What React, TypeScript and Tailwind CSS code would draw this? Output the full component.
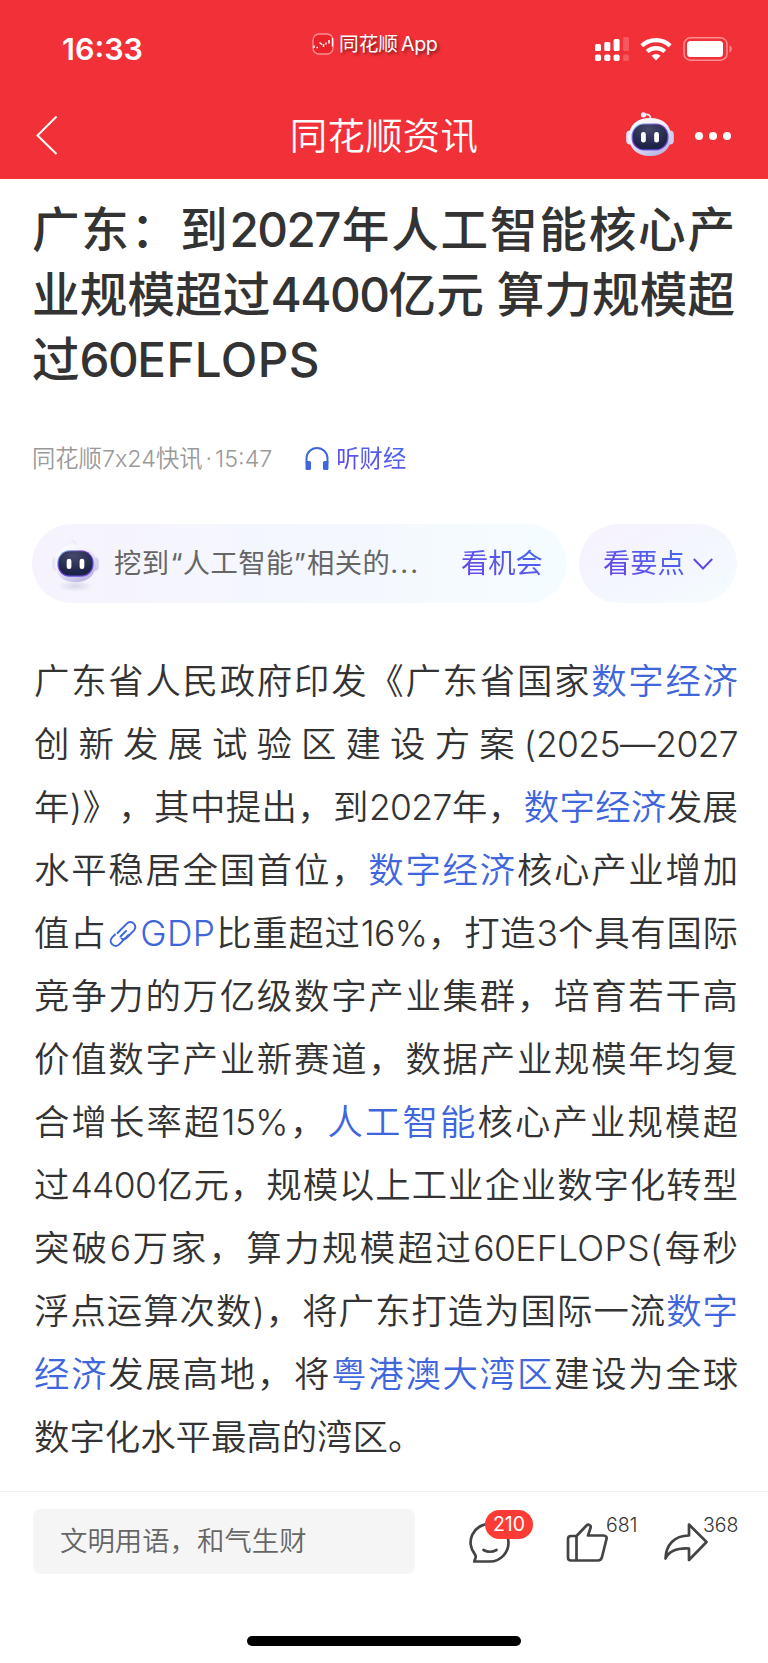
import React from 'react';
import { clsx } from 'clsx';

interface Segment {
  text: string;
  link?: boolean;
  icon?: boolean;
}

const CJK = 'font-[Inter,"Noto_Sans_CJK_SC",sans-serif]';

const titleLines = ['广东：到2027年人工智能核心产', '业规模超过4400亿元 算力规模超', '过60EFLOPS'];

const bodyLines: Segment[][] = [
  [{ text: '广东省人民政府印发《广东省国家' }, { text: '数字经济', link: true }],
  [{ text: '创新发展试验区建设方案(2025—2027' }],
  [{ text: '年)》，其中提出，到2027年，' }, { text: '数字经济', link: true }, { text: '发展' }],
  [{ text: '水平稳居全国首位，' }, { text: '数字经济', link: true }, { text: '核心产业增加' }],
  [{ text: '值占' }, { text: 'GDP', link: true, icon: true }, { text: '比重超过16%，打造3个具有国际' }],
  [{ text: '竞争力的万亿级数字产业集群，培育若干高' }],
  [{ text: '价值数字产业新赛道，数据产业规模年均复' }],
  [{ text: '合增长率超15%，' }, { text: '人工智能', link: true }, { text: '核心产业规模超' }],
  [{ text: '过4400亿元，规模以上工业企业数字化转型' }],
  [{ text: '突破6万家，算力规模超过60EFLOPS(每秒' }],
  [{ text: '浮点运算次数)，将广东打造为国际一流' }, { text: '数字', link: true }],
  [{ text: '经济', link: true }, { text: '发展高地，将' }, { text: '粤港澳大湾区', link: true }, { text: '建设为全球' }],
  [{ text: '数字化水平最高的湾区。' }],
];

// Digits are set a little tighter than the Chinese around them, capitals a little wider
const Mixed: React.FC<{ text: string; digits: string; letters: string }> = ({ text, digits, letters }) => (
  <>
    {text.split(/([0-9%]+|[A-Za-z]+)/).map((part, i) => {
      if (i % 2 === 0) return part;
      return <span key={i} className={/^[0-9]/.test(part) ? digits : letters}>{part}</span>;
    })}
  </>
);

const Robot: React.FC<{ id: string; className?: string; shadow?: boolean }> = ({ id, className, shadow }) => (
  <svg viewBox="0 0 48 56" className={className}>
    <defs>
      <linearGradient id={`${id}-shell`} x1="0" y1="0" x2="0.6" y2="1">
        <stop offset="0" stopColor="#ffffff" />
        <stop offset="0.5" stopColor="#f0effb" />
        <stop offset="1" stopColor="#bcb9e4" />
      </linearGradient>
      <linearGradient id={`${id}-rim`} x1="0" y1="0" x2="1" y2="1">
        <stop offset="0" stopColor="#6fd0f0" />
        <stop offset="0.4" stopColor="#8a45dd" />
        <stop offset="0.7" stopColor="#5a4fe0" />
        <stop offset="1" stopColor="#9a4be6" />
      </linearGradient>
      <radialGradient id={`${id}-shadow`}>
        <stop offset="0" stopColor="#c9cbe2" stopOpacity="0.7" />
        <stop offset="1" stopColor="#c9cbe2" stopOpacity="0" />
      </radialGradient>
      <radialGradient id={`${id}-face`} cx="0.45" cy="0.2" r="0.7">
        <stop offset="0" stopColor="#46496b" />
        <stop offset="1" stopColor="#1b2346" />
      </radialGradient>
    </defs>
    {shadow && <ellipse cx="24" cy="49" rx="18" ry="6" fill={`url(#${id}-shadow)`} />}
    <path d="M18.500 3.500q6-1 6 4" fill="none" stroke="#eceafa" strokeWidth="1.800" />
    <circle cx="17.500" cy="3.800" r="2.600" fill="#f4f2fd" />
    <rect x="0.200" y="19.500" width="8" height="14" rx="4" fill="#e6e4f6" />
    <rect x="39.800" y="19.500" width="8" height="14" rx="4" fill="#d3d0ee" />
    <path
      d="M24 7c13 0 21 7 21 18.500S38 45 24 45 3 37 3 25.500 11 7 24 7Z"
      fill={`url(#${id}-shell)`}
    />
    <rect x="5.500" y="12.500" width="37" height="27" rx="12.500" fill={`url(#${id}-rim)`} />
    <rect x="6.700" y="13.500" width="34.600" height="24.800" rx="11.500" fill={`url(#${id}-face)`} />
    <rect x="15" y="21" width="4.800" height="10.500" rx="2.300" fill="#fff" />
    <rect x="28.200" y="21" width="4.800" height="10.500" rx="2.300" fill="#fff" />
  </svg>
);

const StatusBar: React.FC = () => (
  <div className="relative flex h-[92px] items-center justify-between pl-[62px] pr-[35px]">
    <span className="pt-[6px] font-[Inter,sans-serif] text-[30.5px] font-semibold leading-none">16:33</span>
    <div className="absolute left-[312px] top-[31px] flex items-center gap-[5px]">
      <svg viewBox="0 0 22 22" className="h-[22px] w-[22px]">
        <rect x="1" y="1" width="20" height="20" rx="6" fill="#ea2229" stroke="#f98f92" strokeWidth="1.300" />
        <path d="M2 12.500v2.500M4.500 14.500h1.500M7.500 9.500l2.500 2M11.500 11v3M14 9.500v2M17 7v3.500M20.500 5v8.500" stroke="#fff" strokeWidth="1.500" />
      </svg>
      <span className="whitespace-nowrap pt-px text-[19.700px] leading-[24px] [text-shadow:2px_2px_3px_rgba(0,0,0,0.45)]">
        同花顺<span className="ml-[3px] tracking-[-0.5px]">App</span>
      </span>
    </div>
    <div className="flex items-center pt-[5px]">
      <svg viewBox="0 0 34 26" className="h-[26px] w-[34px]" fill="#fff">
        <rect x="0" y="8" width="6" height="7" rx="1.500" />
        <rect x="9.300" y="6" width="6" height="9" rx="1.500" />
        <rect x="18.600" y="3" width="6" height="12" rx="1.500" />
        <rect x="28" y="1" width="6" height="14" rx="1.500" opacity="0.200" />
        <rect x="0" y="18.500" width="6" height="6.500" rx="1.800" />
        <rect x="9.300" y="18.500" width="6" height="6.500" rx="1.800" />
        <rect x="18.600" y="18.500" width="6" height="6.500" rx="1.800" />
        <rect x="28" y="18.500" width="6" height="6.500" rx="1.800" opacity="0.200" />
      </svg>
      <svg viewBox="0 0 32 24" className="ml-[11px] h-[24px] w-[32px]" fill="none" stroke="#fff" strokeWidth="4.200">
        <path d="M1.800 8.800a20.500 20.500 0 0 1 28.400 0" />
        <path d="M7.200 14.600a12.800 12.800 0 0 1 17.600 0" />
        <path d="M16 23.500l-4.500-4.700a6.500 6.500 0 0 1 9 0Z" fill="#fff" stroke="none" />
      </svg>
      <svg viewBox="0 0 50 24" className="ml-[11px] h-[24px] w-[50px]">
        <rect x="1" y="0.800" width="43" height="22.400" rx="6.500" fill="none" stroke="#f98f92" strokeWidth="1.500" />
        <rect x="4" y="4" width="36" height="16" rx="3.500" fill="#fff" />
        <path d="M46.500 8.500c3 1 3 6 0 7Z" fill="#f98f92" />
      </svg>
    </div>
  </div>
);

const NavBar: React.FC = () => (
  <div className="relative flex h-[87px] items-center justify-center">
    <svg viewBox="0 0 22 40" className="absolute left-[36px] top-[23px] h-[40px] w-[22px]" fill="none" stroke="#fff" strokeWidth="2">
      <path d="M20.500 1.500 1.500 20.500 20.500 39" />
    </svg>
    <h1 className="pt-[2px] text-[37.400px] font-[350] leading-none tracking-[0.3px]">同花顺资讯</h1>
    <Robot id="nav" className="absolute left-[626px] top-[19px] h-[56px] w-[48px]" />
    <div className="absolute left-[695px] top-[40px] flex gap-[6px]">
      <i className="h-2 w-2 rounded-full bg-white" />
      <i className="h-2 w-2 rounded-full bg-white" />
      <i className="h-2 w-2 rounded-full bg-white" />
    </div>
  </div>
);

const LinkIcon: React.FC = () => (
  <svg viewBox="0 0 28 28" className="mx-[3px] inline-block h-[28px] w-[28px] align-[-2px]" fill="none" stroke="#3f66dc" strokeWidth="2" strokeLinecap="round">
    <path d="M8.500 13 17.800 3.600c2-2 5-2 7 0s2 5 0 7L18 17.500c-1.700 1.700-4 2-5.500 1" />
    <path d="M19.500 15 10.200 24.400c-2 2-5 2-7 0s-2-5 0-7L6 14.500" />
    <path d="M11.500 16.500 17 11" />
  </svg>
);

const GRADIENT_TEXT = 'bg-linear-to-tr from-[#6a3de8] to-[#3b6cf0] bg-clip-text text-transparent';

export default function App() {
  return (
    <div className={clsx('h-[1663px] w-[768px] overflow-hidden bg-white text-[#333] [text-spacing-trim:space-all]', CJK)}>
      <header className="h-[179px] bg-[#f23038] text-white">
        <StatusBar />
        <NavBar />
      </header>

      <main className="h-[1312px]">
        <h2 className="ml-[32px] w-[703px] pt-[18px] text-[47.600px] font-medium leading-[65px]">
          {titleLines.map((line, i) => (
            <span
              key={line}
              className={clsx('block whitespace-nowrap', i < 2 && '[text-align-last:justify]')}
            >
              <Mixed text={line} digits="font-[450] tracking-[-1.5px]" letters="font-[450] tracking-[0.4px]" />
            </span>
          ))}
        </h2>

        <div className="ml-[32px] mt-[50px] flex h-[34px] items-center text-[23.300px] leading-[34px]">
          <span className="font-[350] text-[#999]">
            同花顺7x24快讯<span className="mx-[3px]">·</span>15:47
          </span>
          <svg viewBox="0 0 24 24" className="ml-[33px] h-[24px] w-[24px]">
            <path d="M1.500 16v-4.500a10.500 10.500 0 0 1 21 0V16" fill="none" stroke="#3f66dc" strokeWidth="2" />
            <rect x="0.500" y="14" width="5.500" height="9" rx="1.500" fill="#3f66dc" />
            <rect x="18" y="14" width="5.500" height="9" rx="1.500" fill="#3f66dc" />
          </svg>
          <span className={clsx('ml-[7px]', GRADIENT_TEXT)}>听财经</span>
        </div>

        <div className="mt-[48px] flex gap-3 pl-8 text-[27.300px]">
          <div className="flex h-[79px] w-[535px] items-center rounded-full bg-linear-to-r from-[#f6f3fd] via-[#f4f7fe] to-[#f5fcff]">
            <Robot id="tip" shadow className="ml-[20px] mt-1 h-[55px] w-[47px]" />
            <span className="ml-[15px] w-[312px] whitespace-nowrap pt-[2px] tracking-[0.4px] text-[#666]">
              挖到<span className="ml-[1px]">“</span>人工智能<span className="mr-[1px]">”</span>相关的
              <span className="tracking-[2.2px]">...</span>
            </span>
            <span className={clsx('ml-[35px] pt-[2px]', GRADIENT_TEXT)}>看机会</span>
          </div>
          <div className="flex h-[79px] w-[158px] items-center rounded-full bg-linear-to-br from-[#f7f2fe] via-[#f4f6fe] to-[#f5fcff] pl-[24px]">
            <span className={clsx('pt-[2px]', GRADIENT_TEXT)}>看要点</span>
            <svg viewBox="0 0 20 12" className="ml-[8px] h-[12px] w-[20px]" fill="none" stroke="#6145e6" strokeWidth="2">
              <path d="M0.800 1 10 10.500 19.200 1" />
            </svg>
          </div>
        </div>

        <article className="ml-[34px] mt-[47px] w-[704px] text-[35.400px] font-[350] leading-[63px]">
          {bodyLines.map((line, i) => (
            <p
              key={i}
              className={clsx('h-[63px] whitespace-nowrap', i < bodyLines.length - 1 && '[text-align-last:justify]')}
            >
              {line.map((seg) => (
                <span key={seg.text} className={seg.link ? 'text-[#3f66dc]' : undefined}>
                  {seg.icon && <LinkIcon />}
                  <Mixed text={seg.text} digits="tracking-[-0.6px]" letters="tracking-[0.4px]" />
                </span>
              ))}
            </p>
          ))}
        </article>
      </main>

      <footer className="relative h-[172px] border-t border-[#f0f0f0]">
        <div className="ml-[33px] mt-[17px] flex h-[65px] w-[382px] items-center rounded-lg bg-[#f5f5f5] pl-[27px] pt-px text-[27.400px] font-[350] text-[#666]">
          文明用语，和气生财
        </div>
        <div className="absolute left-[469px] top-[31px] text-[#444]">
          <svg viewBox="0 0 42 42" className="h-[42px] w-[42px]" fill="none" stroke="currentColor" strokeWidth="2.700" strokeLinecap="round" strokeLinejoin="round">
            <path d="M20.500 1A18.500 18.500 0 0 0 6 31.500c1 1.500 1 2.500.3 4l-1 3H21A18.500 18.500 0 0 0 20.500 1Z" />
            <path d="M14.500 27q6.500 3.500 13 0" />
          </svg>
          <span className="absolute left-[16px] top-[-13px] flex h-[29px] w-[48px] items-center justify-center rounded-full bg-[#fc3b34] text-[19.500px] text-white">
            210
          </span>
        </div>
        <svg viewBox="0 0 42 40" className="absolute left-[566px] top-[31px] h-[40px] w-[42px]" fill="none" stroke="#444" strokeWidth="2.700" strokeLinejoin="round">
          <path d="M10.500 13 20.500 2.500c2-2 5 0 4 2.500l-2.500 7.500h15.500c2.500 0 3.500 1.500 3 3.500L36 34c-.6 2.500-2 3.500-4 3.500H5c-2 0-3-1-3-3V16c0-2 1-3 3-3h5.500v24" />
        </svg>
        <span className="absolute left-[606px] top-[19px] text-[19.500px] font-[350]">681</span>
        <svg viewBox="0 0 46 40" className="absolute left-[663px] top-[31px] h-[40px] w-[46px]" fill="none" stroke="#444" strokeWidth="2.700" strokeLinejoin="round">
          <path d="M26 1.500 43.500 19 26 37V25.500C14 25 6 28 2.500 35.500 3 22 11 12.500 26 12.500Z" />
        </svg>
        <span className="absolute left-[703px] top-[19px] text-[19.500px] font-[350]">368</span>
        <div className="absolute left-[247px] top-[144px] h-[10px] w-[274px] rounded-full bg-black" />
      </footer>
    </div>
  );
}
